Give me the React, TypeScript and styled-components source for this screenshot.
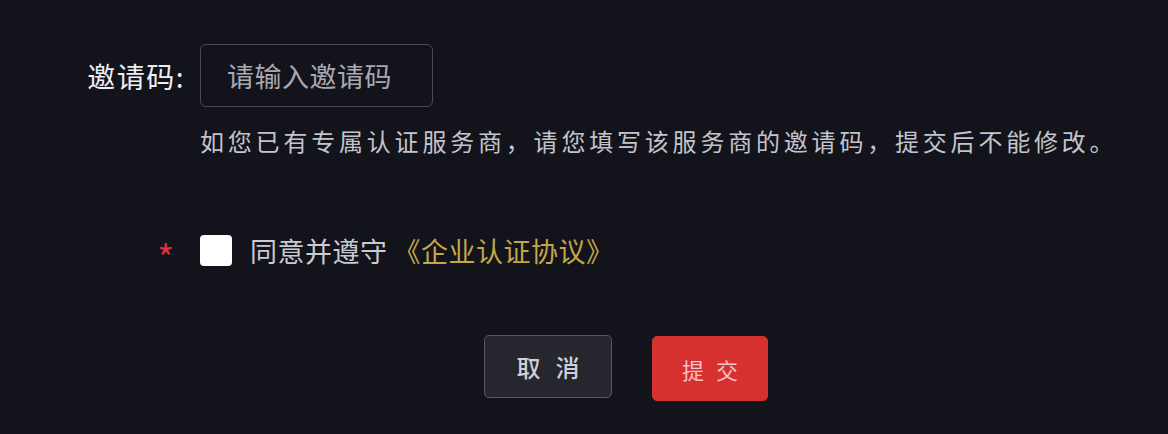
import React, { useState } from 'react'
import styled, { createGlobalStyle } from 'styled-components'

const GlobalStyle = createGlobalStyle`
  html, body {
    margin: 0;
    padding: 0;
    background: #13131b;
  }
  body {
    font-family: "Noto Sans CJK SC", "Noto Sans", sans-serif;
  }
`

const Page = styled.div`
  width: 1168px;
  height: 434px;
  background: #13131b;
  overflow: hidden;
`

const Form = styled.form`
  display: grid;
  grid-template-columns: 185px 1fr;
  column-gap: 15px;
  padding-top: 44px;
`

const Label = styled.label`
  display: flex;
  align-items: center;
  justify-content: flex-end;
  height: 63px;
  color: #eeeef4;
  font-size: 28px;
  letter-spacing: 1.5px;
  font-weight: 400;
`

const Input = styled.input`
  box-sizing: border-box;
  width: 233px;
  height: 63px;
  padding: 0 0 0 26px;
  background: transparent;
  border: 1px solid #4a4b56;
  border-radius: 6px;
  color: #e6e6ec;
  font-family: inherit;
  font-size: 27px;
  letter-spacing: 0.5px;
  outline: none;

  &::placeholder {
    color: #a9a9b2;
  }
`

const Help = styled.p`
  grid-column: 2;
  margin: 18px 0 0;
  color: #c4c4cc;
  font-size: 24px;
  line-height: 32px;
  letter-spacing: 3.8px;
  white-space: nowrap;
`

const Required = styled.div`
  display: flex;
  justify-content: flex-end;
  align-items: center;
  padding-right: 11px;
  margin-top: 77px;
  height: 32px;
  color: #e0313a;
  font-size: 36px;
  line-height: 1;
  padding-top: 12px;
  box-sizing: border-box;
`

const Agree = styled.label`
  display: flex;
  align-items: center;
  gap: 18px;
  margin-top: 77px;
  height: 32px;
  color: #cacad2;
  font-size: 27px;
  letter-spacing: 0.5px;
  cursor: pointer;
`

const Check = styled.input`
  appearance: none;
  margin: 0;
  width: 32px;
  height: 31px;
  background: #ffffff;
  border-radius: 4px;
  cursor: pointer;

  &:checked {
    background: #d6302f;
  }
`

const Link = styled.span`
  color: #c4a649;
  margin-left: -12px;
`

const Actions = styled.div`
  grid-column: 2;
  display: flex;
  align-items: flex-start;
  gap: 40px;
  margin-top: 69px;
  padding-left: 284px;
`

const Button = styled.button<{ $primary?: boolean }>`
  box-sizing: border-box;
  width: ${p => (p.$primary ? '116px' : '128px')};
  height: ${p => (p.$primary ? '65px' : '63px')};
  margin-top: ${p => (p.$primary ? '1px' : '0')};
  border-radius: 5px;
  border: 1px solid ${p => (p.$primary ? '#d6302f' : '#565761')};
  background: ${p => (p.$primary ? '#d6302f' : '#25262e')};
  color: ${p => (p.$primary ? '#f6c4c4' : '#cdd0d8')};
  font-family: inherit;
  font-size: ${p => (p.$primary ? '22px' : '24px')};
  font-weight: ${p => (p.$primary ? 400 : 500)};
  letter-spacing: ${p => (p.$primary ? '12px' : '15px')};
  padding: 0 0 0 ${p => (p.$primary ? '12px' : '15px')};
  cursor: pointer;
`

const App = () => {
  const [agreed, setAgreed] = useState(false)

  return (
    <Page>
      <GlobalStyle />
      <Form onSubmit={e => e.preventDefault()}>
        <Label htmlFor='invite'>邀请码:</Label>
        <Input id='invite' placeholder='请输入邀请码' />
        <Help>如您已有专属认证服务商，请您填写该服务商的邀请码，提交后不能修改。</Help>
        <Required>*</Required>
        <Agree>
          <Check type='checkbox' checked={agreed} onChange={() => setAgreed(!agreed)} />
          同意并遵守<Link>《企业认证协议》</Link>
        </Agree>
        <Actions>
          <Button type='button'>取消</Button>
          <Button type='submit' $primary>提交</Button>
        </Actions>
      </Form>
    </Page>
  )
}

export default App
